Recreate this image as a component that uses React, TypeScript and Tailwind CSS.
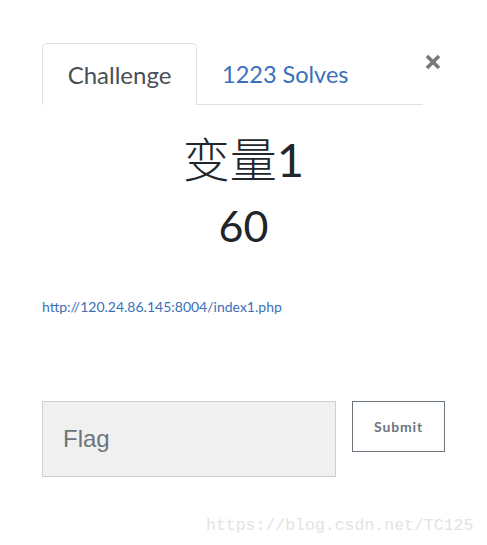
import React from "react";

export default function App() {
  return (
    <div className="relative w-[487px] h-[545px] bg-white overflow-hidden" style={{ fontFamily: "Lato, 'Noto Sans CJK SC', sans-serif" }}>
      <div className="pl-[42px] pr-[64px] pt-[43px]">
        <div className="flex items-end border-b border-[#dee2e6] h-[62px]">
          <div className="h-[62px] w-[155px] border border-b-0 border-[#dee2e6] rounded-t-[5px] bg-white -mb-px flex items-center justify-center text-[24px] text-[#495057]">
            Challenge
          </div>
          <div className="h-[62px] flex items-center pl-[25px] pt-[3px] text-[23.5px] text-[#3a70b9]">1223 Solves</div>
        </div>
      </div>
      <button className="absolute left-[421px] top-[48px] w-[24px] h-[28px] flex items-center justify-center text-[#7a7a7a]">
        <svg width="18" height="18" viewBox="0 0 18 18">
          <path d="M3 3 L15 15 M15 3 L3 15" stroke="#787878" strokeWidth="3.6" strokeLinecap="butt" />
        </svg>
      </button>
      <div className="text-center text-[#23272b] mt-[26px] text-[47px] leading-[56px]">
        <span className="font-light">变量</span>1
      </div>
      <div className="text-center text-[#212529] mt-[14px] text-[43px] leading-[50px]">60</div>
      <div className="pl-[42px] mt-[47px] text-[14px] leading-[17px] text-[#3a70b9]">http://120.24.86.145:8004/index1.php</div>
      <div className="flex pl-[42px] mt-[86px] gap-[16px]">
        <div className="w-[294px] h-[76px] bg-[#f0f0f0] border border-[#c9d0da] flex items-center pl-[20px] text-[24px] text-[#6c757d]" style={{ fontFamily: "'Liberation Sans', Arial, sans-serif" }}>
          Flag
        </div>
        <div className="w-[93px] h-[51px] border border-[#6c757d] flex items-center justify-center text-[14px] font-bold tracking-[0.06em] text-[#6c757d]">
          Submit
        </div>
      </div>
      <div className="absolute left-[206px] top-[514px] text-[16.5px] text-[#e3e3e3]" style={{ fontFamily: "'Liberation Mono', monospace" }}>
        https://blog.csdn.net/TC125
      </div>
    </div>
  );
}
